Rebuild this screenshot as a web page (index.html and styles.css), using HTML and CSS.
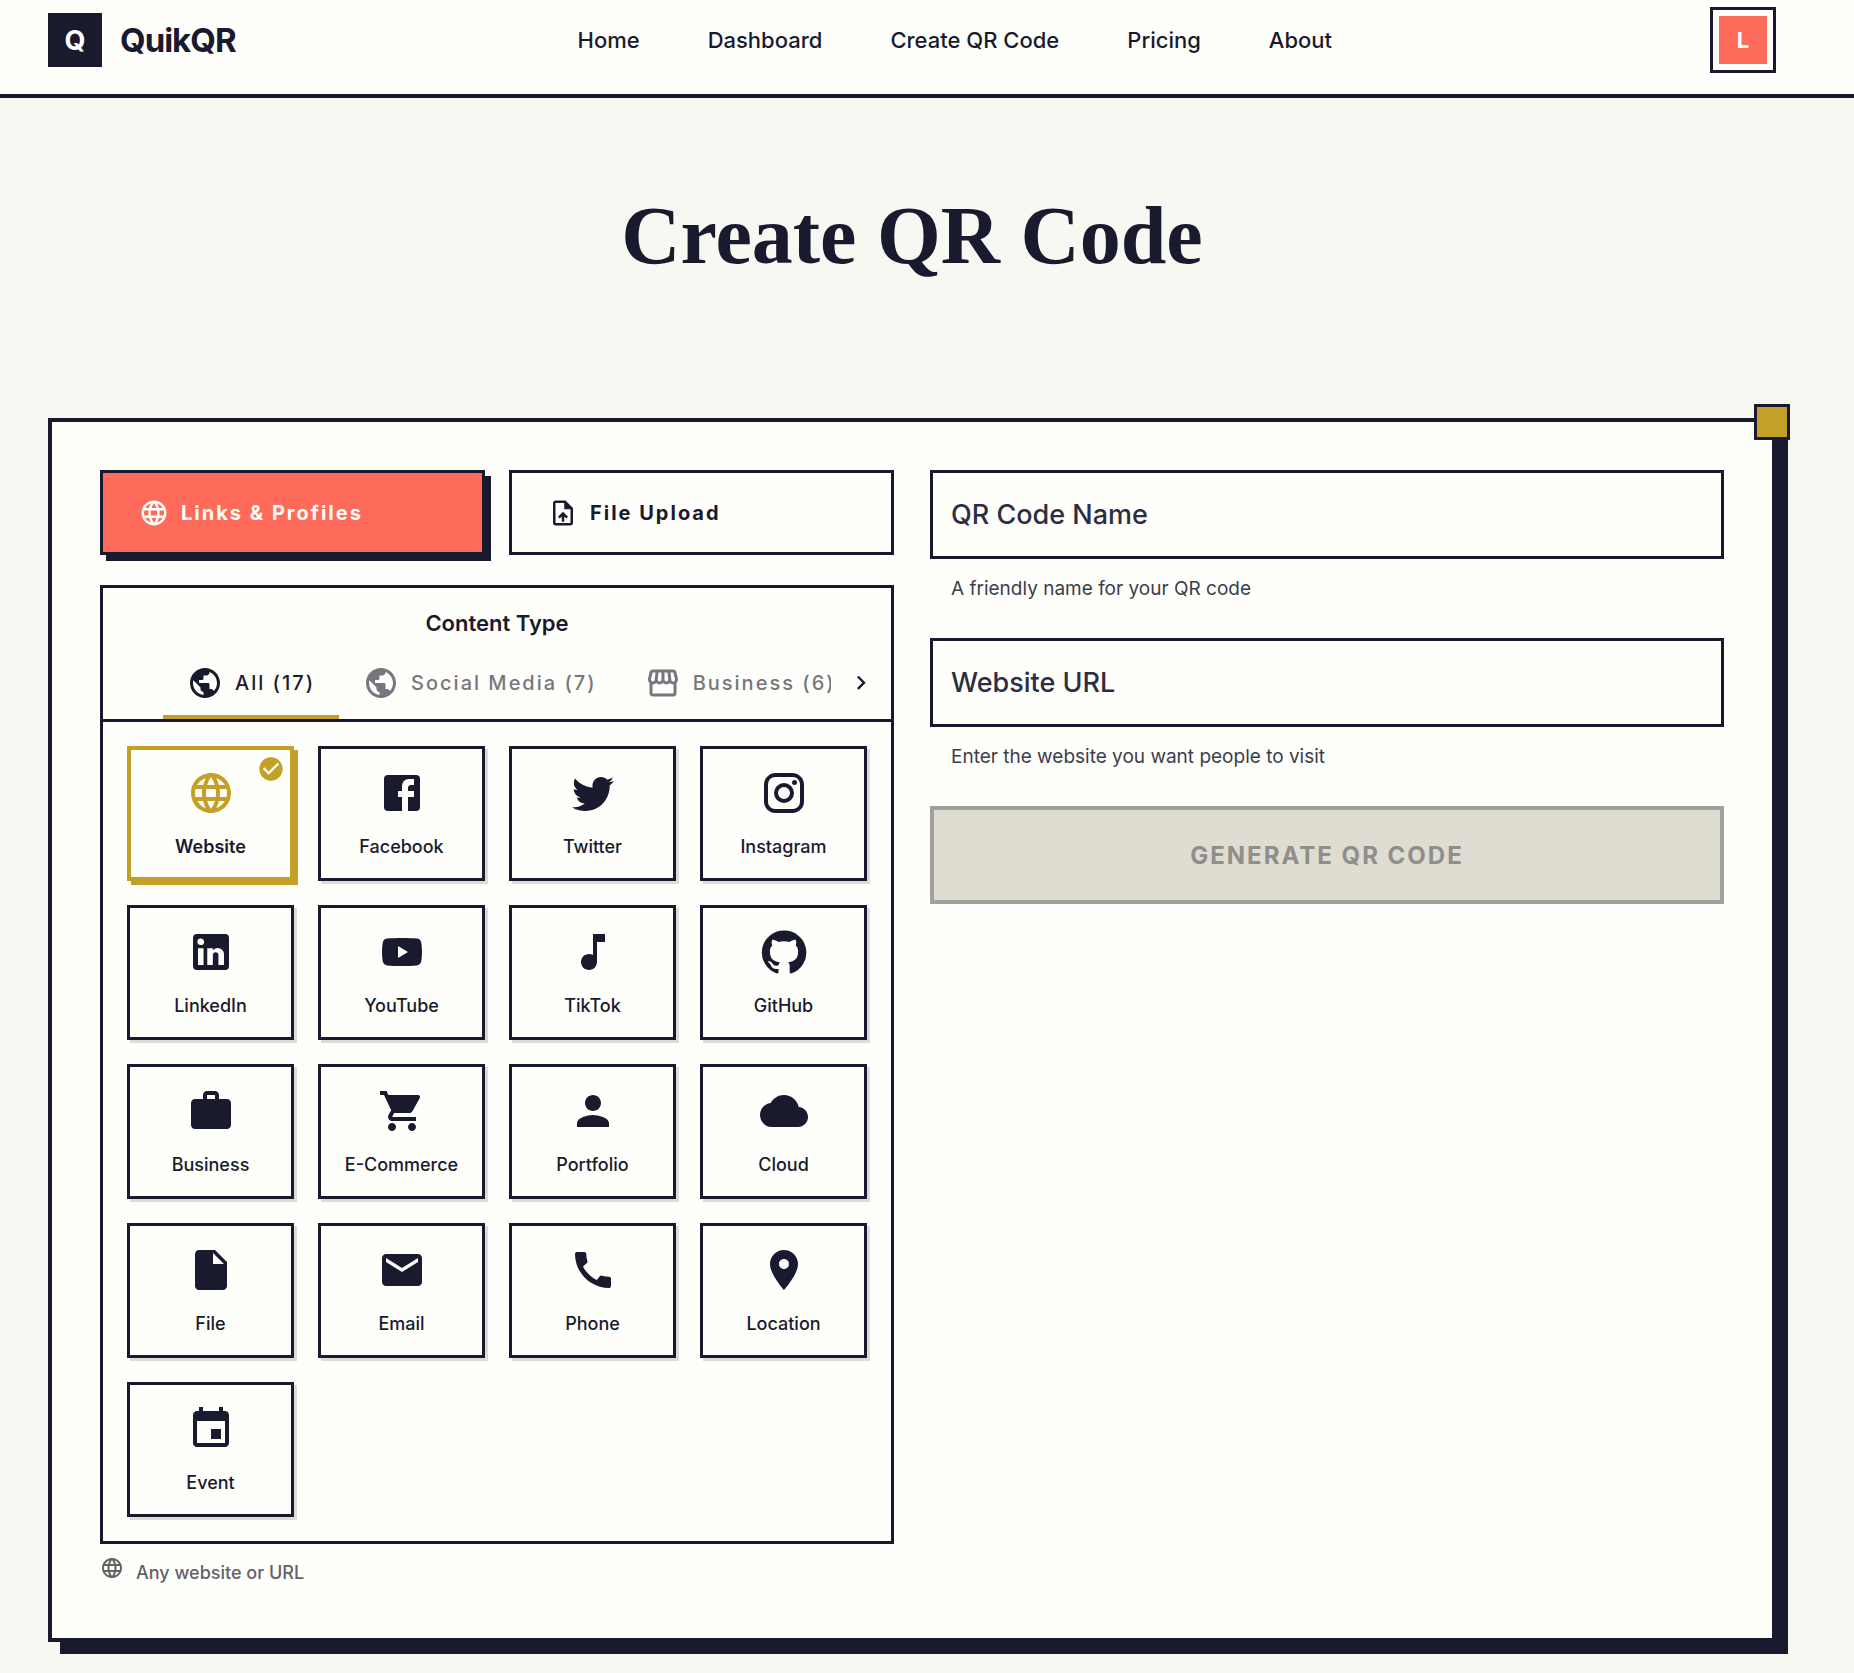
FILE: index.html
```html
<!DOCTYPE html>
<html lang="en">
<head>
    <meta charset="UTF-8">
    <meta name="viewport" content="width=device-width, initial-scale=1.0">
    <title>QuikQR - Create QR Code</title>
    <link rel="stylesheet" href="styles.css">
</head>
<body>
    <!-- Icon sprite -->
    <svg class="sprite" aria-hidden="true">
        <symbol id="i-language" viewBox="0 0 24 24"><path d="M11.99 2C6.47 2 2 6.48 2 12s4.47 10 9.99 10C17.52 22 22 17.52 22 12S17.52 2 11.99 2zm6.93 6h-2.95c-.32-1.25-.78-2.45-1.38-3.56 1.84.63 3.37 1.91 4.33 3.56zM12 4.04c.83 1.2 1.48 2.53 1.91 3.96h-3.82c.43-1.43 1.08-2.76 1.91-3.96zM4.26 14C4.1 13.36 4 12.69 4 12s.1-1.36.26-2h3.38c-.08.66-.14 1.32-.14 2s.06 1.34.14 2H4.26zm.82 2h2.95c.32 1.25.78 2.45 1.38 3.56-1.84-.63-3.37-1.9-4.33-3.56zm2.95-8H5.08c.96-1.66 2.49-2.93 4.33-3.56C8.81 5.55 8.35 6.75 8.03 8zM12 19.96c-.83-1.2-1.48-2.53-1.91-3.96h3.82c-.43 1.43-1.08 2.76-1.91 3.96zM14.34 14H9.66c-.09-.66-.16-1.32-.16-2s.07-1.35.16-2h4.68c.09.65.16 1.32.16 2s-.07 1.34-.16 2zm.25 5.56c.6-1.11 1.06-2.31 1.38-3.56h2.95c-.96 1.65-2.49 2.93-4.33 3.56zM16.36 14c.08-.66.14-1.32.14-2s-.06-1.34-.14-2h3.38c.16.64.26 1.31.26 2s-.1 1.36-.26 2h-3.38z"/></symbol>
        <symbol id="i-upload" viewBox="0 0 24 24"><path d="M14 2H6c-1.100 0-1.990.9-1.990 2L4 20c0 1.100.89 2 1.990 2H18c1.100 0 2-.9 2-2V8l-6-6zm4 18H6V4h7v5h5v11zM8 15.010l1.410 1.410L11 14.840V19h2v-4.160l1.590 1.590L16 15.010 12.010 11 8 15.010z"/></symbol>
        <symbol id="i-public" viewBox="0 0 24 24"><path d="M12 2C6.48 2 2 6.48 2 12s4.480 10 10 10 10-4.480 10-10S17.520 2 12 2zm-1 17.930c-3.950-.49-7-3.850-7-7.930 0-.62.08-1.210.21-1.790L9 15v1c0 1.100.9 2 2 2v1.930zm6.900-2.540c-.26-.81-1-1.390-1.900-1.390h-1v-3c0-.55-.45-1-1-1H8v-2h2c.55 0 1-.45 1-1V7h2c1.100 0 2-.9 2-2v-.41c2.930 1.190 5 4.060 5 7.410 0 2.080-.8 3.970-2.100 5.390z"/></symbol>
        <symbol id="i-store" viewBox="0 0 24 24"><path d="M21.900 8.890l-1.050-4.370c-.22-.9-1-1.520-1.910-1.520H5.050c-.9 0-1.690.63-1.900 1.520L2.100 8.890c-.24 1.020-.02 2.060.62 2.880.08.11.19.19.28.290V19c0 1.100.9 2 2 2h14c1.100 0 2-.9 2-2v-6.940c.09-.09.2-.18.28-.28.64-.82.87-1.870.62-2.890zm-2.990-3.900l1.050 4.370c.1.420.01.840-.25 1.170-.14.180-.44.470-.94.470-.61 0-1.140-.49-1.210-1.140L16.980 5l1.930-.01zM13 5h1.960l.54 4.520c.05.390-.07.780-.33 1.070-.22.260-.54.410-.95.410-.67 0-1.220-.59-1.220-1.310V5zM8.490 9.520L9.040 5H11v4.690c0 .72-.55 1.310-1.290 1.310-.34 0-.65-.15-.89-.41-.25-.29-.37-.68-.33-1.070zm-4.450-.16L5.050 5h1.970l-.58 4.860c-.08.650-.6 1.140-1.210 1.140-.49 0-.8-.29-.93-.47-.27-.32-.36-.75-.26-1.170zM5 19v-6.030c.08.010.15.030.23.030.87 0 1.660-.36 2.240-.95.6.6 1.400.95 2.310.95.87 0 1.650-.36 2.230-.93.59.57 1.390.93 2.290.93.84 0 1.640-.35 2.240-.95.58.59 1.370.95 2.240.95.08 0 .15-.02.23-.03V19H5z"/></symbol>
        <symbol id="i-chevron" viewBox="0 0 24 24"><path d="M8.590 16.340l4.580-4.590-4.580-4.590L10 5.750l6 6-6 6z"/></symbol>
        <symbol id="i-check" viewBox="0 0 24 24"><path d="M12 2C6.480 2 2 6.480 2 12s4.480 10 10 10 10-4.480 10-10S17.520 2 12 2zm-2 15l-5-5 1.410-1.410L10 14.170l7.590-7.590L19 8l-9 9z"/></symbol>
        <symbol id="i-facebook" viewBox="0 0 24 24"><path d="M5 3h14a2 2 0 0 1 2 2v14a2 2 0 0 1-2 2h-4v-7h3v-3h-3V9.500c0-.8.400-1.500 1.500-1.500H18V5h-2.500C13.300 5 12 6.600 12 9v2h-2v3h2v7H5a2 2 0 0 1-2-2V5a2 2 0 0 1 2-2z"/></symbol>
        <symbol id="i-twitter" viewBox="0 0 24 24"><path d="M22.460 6c-.77.350-1.600.580-2.460.690.880-.53 1.560-1.370 1.880-2.380-.83.500-1.750.850-2.720 1.050C18.370 4.500 17.260 4 16 4c-2.350 0-4.270 1.920-4.270 4.290 0 .340.040.670.110.980C8.280 9.090 5.110 7.380 3 4.790c-.37.630-.58 1.370-.58 2.150 0 1.490.75 2.810 1.910 3.560-.71 0-1.370-.2-1.950-.5v.030c0 2.080 1.480 3.820 3.440 4.210a4.220 4.220 0 0 1-1.930.070 4.280 4.280 0 0 0 4 2.980 8.521 8.521 0 0 1-5.330 1.840c-.34 0-.68-.02-1.020-.06C3.440 20.290 5.700 21 8.120 21 16 21 20.330 14.460 20.330 8.790c0-.19 0-.37-.01-.56.84-.6 1.560-1.360 2.140-2.230z"/></symbol>
        <symbol id="i-instagram" viewBox="0 0 24 24"><path d="M7.800 2h8.400C19.400 2 22 4.600 22 7.800v8.400a5.800 5.800 0 0 1-5.800 5.800H7.800C4.600 22 2 19.400 2 16.200V7.800A5.800 5.800 0 0 1 7.800 2m-.2 2A3.600 3.600 0 0 0 4 7.600v8.800C4 18.390 5.610 20 7.600 20h8.800a3.600 3.600 0 0 0 3.600-3.600V7.600C20 5.610 18.390 4 16.400 4H7.600m9.650 1.500a1.250 1.250 0 1 1 0 2.500 1.250 1.250 0 0 1 0-2.500M12 7a5 5 0 1 1 0 10 5 5 0 0 1 0-10m0 2a3 3 0 1 0 0 6 3 3 0 0 0 0-6z"/></symbol>
        <symbol id="i-linkedin" viewBox="0 0 24 24"><path d="M19 3a2 2 0 0 1 2 2v14a2 2 0 0 1-2 2H5a2 2 0 0 1-2-2V5a2 2 0 0 1 2-2h14m-.5 15.500v-5.300a3.260 3.260 0 0 0-3.260-3.260c-.85 0-1.840.520-2.320 1.300v-1.110h-2.790v8.370h2.790v-4.930c0-.77.620-1.400 1.390-1.400a1.400 1.400 0 0 1 1.400 1.400v4.930h2.790M6.880 8.560a1.680 1.680 0 0 0 1.680-1.680c0-.93-.75-1.690-1.680-1.690a1.690 1.690 0 0 0-1.690 1.690c0 .930.760 1.680 1.690 1.680m1.390 9.940v-8.370H5.500v8.370h2.770z"/></symbol>
        <symbol id="i-youtube" viewBox="0 0 24 24"><path d="M10 15l5-3-5-3v6m11.600-7.800c.2 1 .4 2.800.4 4.800s-.2 3.800-.4 4.800c-.3 1.200-1.100 1.800-2.200 1.900-2 .2-4.400.3-7.400.3s-5.400-.1-7.400-.3c-1.100-.1-1.900-.7-2.200-1.900C2.200 15.800 2 14 2 12s.2-3.800.4-4.800c.3-1.200 1.100-1.800 2.200-1.900C6.600 5.100 9 5 12 5s5.400.1 7.400.3c1.100.1 1.900.7 2.200 1.900z"/></symbol>
        <symbol id="i-note" viewBox="0 0 24 24"><path d="M12 3v10.550c-.59-.34-1.270-.55-2-.55-2.210 0-4 1.790-4 4s1.790 4 4 4 4-1.790 4-4V7h4V3h-6z"/></symbol>
        <symbol id="i-github" viewBox="0 0 24 24"><path d="M12 1.270a11 11 0 0 0-3.480 21.460c.55.090.73-.28.730-.55v-1.840c-3.030.640-3.670-1.460-3.670-1.460-.55-1.290-1.280-1.650-1.280-1.650-.92-.65.100-.65.100-.65 1.100 0 1.730 1.100 1.730 1.100.92 1.650 2.570 1.200 3.210.920a2 2 0 0 1 .640-1.470c-2.470-.27-5.040-1.190-5.040-5.500 0-1.100.460-2.100 1.200-2.840a3.760 3.760 0 0 1 0-2.930s.91-.28 3.110 1.100c1.800-.49 3.700-.49 5.500 0 2.100-1.380 3.020-1.100 3.020-1.100a3.760 3.760 0 0 1 .100 2.930c.830.740 1.200 1.740 1.200 2.940 0 4.210-2.570 5.130-5.040 5.400.450.370.820.920.820 2.020v3.030c0 .270.100.640.730.550A11 11 0 0 0 12 1.270"/></symbol>
        <symbol id="i-work" viewBox="0 0 24 24"><path d="M20 6h-4V4c0-1.110-.89-2-2-2h-4c-1.110 0-2 .89-2 2v2H4c-1.110 0-1.990.89-1.990 2L2 19c0 1.110.89 2 2 2h16c1.110 0 2-.89 2-2V8c0-1.110-.89-2-2-2zm-6 0h-4V4h4v2z"/></symbol>
        <symbol id="i-cart" viewBox="0 0 24 24"><path d="M7 18c-1.100 0-1.990.9-1.990 2S5.900 22 7 22s2-.9 2-2-.9-2-2-2zM1 2v2h2l3.600 7.590-1.350 2.450c-.16.280-.25.610-.25.960 0 1.100.9 2 2 2h12v-2H7.420c-.14 0-.25-.11-.25-.25l.03-.12.900-1.630h7.450c.75 0 1.410-.41 1.750-1.030l3.580-6.490c.08-.14.120-.31.120-.48 0-.55-.45-1-1-1H5.210l-.94-2H1zm16 16c-1.100 0-1.990.9-1.990 2s.89 2 1.990 2 2-.9 2-2-.9-2-2-2z"/></symbol>
        <symbol id="i-person" viewBox="0 0 24 24"><path d="M12 12c2.210 0 4-1.790 4-4s-1.790-4-4-4-4 1.790-4 4 1.790 4 4 4zm0 2c-2.670 0-8 1.340-8 4v2h16v-2c0-2.660-5.330-4-8-4z"/></symbol>
        <symbol id="i-cloud" viewBox="0 0 24 24"><path d="M19.350 10.040C18.670 6.590 15.640 4 12 4 9.110 4 6.600 5.640 5.350 8.040 2.340 8.360 0 10.910 0 14c0 3.310 2.690 6 6 6h13c2.760 0 5-2.240 5-5 0-2.640-2.050-4.780-4.650-4.960z"/></symbol>
        <symbol id="i-file" viewBox="0 0 24 24"><path d="M6 2c-1.100 0-1.990.9-1.990 2L4 20c0 1.100.89 2 1.990 2H18c1.100 0 2-.9 2-2V8l-6-6H6zm7 7V3.500L18.500 9H13z"/></symbol>
        <symbol id="i-email" viewBox="0 0 24 24"><path d="M20 4H4c-1.100 0-1.990.9-1.990 2L2 18c0 1.100.9 2 2 2h16c1.100 0 2-.9 2-2V6c0-1.100-.9-2-2-2zm0 4l-8 5-8-5V6l8 5 8-5v2z"/></symbol>
        <symbol id="i-phone" viewBox="0 0 24 24"><path d="M20.010 15.380c-1.230 0-2.420-.2-3.530-.56-.35-.12-.74-.03-1.010.240l-1.570 1.970c-2.830-1.350-5.480-3.900-6.890-6.830l1.950-1.660c.27-.28.350-.67.240-1.020-.37-1.110-.56-2.300-.56-3.530 0-.54-.45-.99-.99-.99H4.190C3.650 3 3 3.240 3 3.990 3 13.280 10.730 21 20.010 21c.71 0 .99-.63.990-1.180v-3.450c0-.54-.45-.99-.99-.99z"/></symbol>
        <symbol id="i-place" viewBox="0 0 24 24"><path d="M12 2C8.130 2 5 5.130 5 9c0 5.250 7 13 7 13s7-7.750 7-13c0-3.870-3.130-7-7-7zm0 9.500c-1.380 0-2.500-1.120-2.500-2.500s1.120-2.500 2.500-2.500 2.500 1.120 2.500 2.500-1.120 2.500-2.500 2.500z"/></symbol>
        <symbol id="i-event" viewBox="0 0 24 24"><path d="M17 12h-5v5h5v-5zM16 1v2H8V1H6v2H5c-1.110 0-1.990.9-1.990 2L3 19c0 1.100.89 2 2 2h14c1.100 0 2-.9 2-2V5c0-1.100-.9-2-2-2h-1V1h-2zm3 18H5V8h14v11z"/></symbol>
    </svg>

    <header class="header">
        <a class="brand" href="#">
            <span class="brand-mark">Q</span>
            <span class="brand-name">QuikQR</span>
        </a>
        <nav class="nav">
            <a href="#">Home</a>
            <a href="#">Dashboard</a>
            <a href="#">Create QR Code</a>
            <a href="#">Pricing</a>
            <a href="#">About</a>
        </nav>
        <button class="profile" type="button" aria-label="Account"><span class="avatar">L</span></button>
    </header>

    <main class="page">
        <h1 class="page-title">Create QR Code</h1>

        <div class="card">
            <div class="left">
                <div class="modes">
                    <button class="mode active" type="button"><svg><use href="#i-language"/></svg>Links &amp; Profiles</button>
                    <button class="mode" type="button"><svg><use href="#i-upload"/></svg>File Upload</button>
                </div>

                <section class="types">
                    <h2 class="types-title">Content Type</h2>
                    <div class="tab-bar">
                        <div class="tabs" role="tablist">
                            <button class="tab active" role="tab" aria-selected="true"><svg><use href="#i-public"/></svg>All (17)</button>
                            <button class="tab" role="tab"><svg><use href="#i-public"/></svg>Social Media (7)</button>
                            <button class="tab" role="tab"><svg><use href="#i-store"/></svg>Business (6)</button>
                        </div>
                        <button class="tab-scroll" type="button" aria-label="Next tabs"><svg><use href="#i-chevron"/></svg></button>
                    </div>
                    <div class="type-grid">
                        <button class="type selected" type="button">
                            <svg class="tick"><use href="#i-check"/></svg>
                            <svg class="icon"><use href="#i-language"/></svg>
                            Website
                        </button>
                        <button class="type" type="button"><svg class="icon"><use href="#i-facebook"/></svg>Facebook</button>
                        <button class="type" type="button"><svg class="icon"><use href="#i-twitter"/></svg>Twitter</button>
                        <button class="type" type="button"><svg class="icon"><use href="#i-instagram"/></svg>Instagram</button>
                        <button class="type" type="button"><svg class="icon"><use href="#i-linkedin"/></svg>LinkedIn</button>
                        <button class="type" type="button"><svg class="icon"><use href="#i-youtube"/></svg>YouTube</button>
                        <button class="type" type="button"><svg class="icon"><use href="#i-note"/></svg>TikTok</button>
                        <button class="type" type="button"><svg class="icon"><use href="#i-github"/></svg>GitHub</button>
                        <button class="type" type="button"><svg class="icon"><use href="#i-work"/></svg>Business</button>
                        <button class="type" type="button"><svg class="icon"><use href="#i-cart"/></svg>E-Commerce</button>
                        <button class="type" type="button"><svg class="icon"><use href="#i-person"/></svg>Portfolio</button>
                        <button class="type" type="button"><svg class="icon"><use href="#i-cloud"/></svg>Cloud</button>
                        <button class="type" type="button"><svg class="icon"><use href="#i-file"/></svg>File</button>
                        <button class="type" type="button"><svg class="icon"><use href="#i-email"/></svg>Email</button>
                        <button class="type" type="button"><svg class="icon"><use href="#i-phone"/></svg>Phone</button>
                        <button class="type" type="button"><svg class="icon"><use href="#i-place"/></svg>Location</button>
                        <button class="type" type="button"><svg class="icon"><use href="#i-event"/></svg>Event</button>
                    </div>
                </section>

                <p class="note"><svg><use href="#i-language"/></svg>Any website or URL</p>
            </div>

            <form class="right">
                <div class="field">
                    <div class="field-box">
                        <input id="qr-name" type="text">
                        <label for="qr-name">QR Code Name</label>
                    </div>
                    <p class="help">A friendly name for your QR code</p>
                </div>
                <div class="field">
                    <div class="field-box">
                        <input id="qr-url" type="text">
                        <label for="qr-url">Website URL</label>
                    </div>
                    <p class="help">Enter the website you want people to visit</p>
                </div>
                <button class="generate" type="submit" disabled>GENERATE QR CODE</button>
            </form>
        </div>
    </main>
</body>
</html>
```

FILE: styles.css
```css
*, *::before {
    margin: 0;
    padding: 0;
    box-sizing: border-box;
}

body {
    font-family: Inter, "Open Sans", sans-serif;
    background-color: #f8f8f3;
    color: #1a1a2e;
}

button, input {
    font-family: inherit;
    color: inherit;
}

button {
    cursor: pointer;
}

svg {
    fill: currentColor;
    flex-shrink: 0;
}

.sprite {
    display: none;
}

/* Header */
.header {
    display: flex;
    align-items: center;
    padding: 7px 78px 21px 48px;
    background-color: #fefffa;
    border-bottom: 4px solid #1a1a2e;
}

.brand {
    display: flex;
    align-items: center;
    gap: 18px;
    color: inherit;
    text-decoration: none;
}

.brand-mark {
    width: 54px;
    height: 54px;
    display: flex;
    align-items: center;
    justify-content: center;
    background-color: #1a1a2e;
    color: #fefffa;
    font-size: 27px;
    font-weight: 700;
}

.brand-name {
    font-size: 33px;
    font-weight: 700;
    letter-spacing: -1px;
}

.nav {
    flex: 1;
    display: flex;
    justify-content: center;
    gap: 68px;
    padding-right: 36px;
}

.nav a {
    color: inherit;
    text-decoration: none;
    font-size: 22px;
    font-weight: 500;
}

.profile {
    padding: 6px;
    border: 3px solid #1a1a2e;
    background-color: #fefffa;
}

.avatar {
    width: 48px;
    height: 48px;
    display: flex;
    align-items: center;
    justify-content: center;
    background-color: #ff6b5b;
    color: #fefffa;
    font-size: 22px;
    font-weight: 700;
}

/* Page */
.page {
    padding: 88px 78px 30px 48px;
}

.page-title {
    margin-bottom: 132px;
    text-align: center;
    font-family: "Liberation Serif", serif;
    font-size: 82px;
    font-weight: 700;
    line-height: 100px;
}

.card {
    position: relative;
    display: grid;
    grid-template-columns: 1fr 1fr;
    gap: 36px;
    padding: 48px;
    background-color: #fefffa;
    border: 4px solid #1a1a2e;
    box-shadow: 12px 12px 0 #1a1a2e;
}

/* gold square on the corner */
.card::before {
    content: "";
    position: absolute;
    top: -18px;
    right: -18px;
    width: 36px;
    height: 36px;
    background-color: #c5a028;
    border: 3px solid #1a1a2e;
}

.left {
    min-width: 0;
}

.modes {
    display: grid;
    grid-template-columns: 1fr 1fr;
    gap: 24px;
    margin-bottom: 30px;
}

.mode {
    display: flex;
    align-items: center;
    gap: 12px;
    height: 85px;
    padding: 0 36px;
    background-color: #fefffa;
    border: 3px solid #1a1a2e;
    font-size: 20px;
    font-weight: 700;
    letter-spacing: 2px;
}

.mode svg {
    width: 30px;
    height: 30px;
}

.mode.active {
    background-color: #ff6b5b;
    color: #fefffa;
    box-shadow: 6px 6px 0 #1a1a2e;
}

/* Content type box */
.types {
    border: 3px solid #1a1a2e;
}

.types-title {
    padding: 20px 0 9px;
    text-align: center;
    font-size: 22px;
    font-weight: 600;
    line-height: 30px;
}

.tab-bar {
    display: flex;
    padding-left: 60px;
    border-bottom: 3px solid #1a1a2e;
}

.tabs {
    flex: 1;
    min-width: 0;
    display: flex;
    overflow: hidden;
}

.tab {
    flex-shrink: 0;
    display: flex;
    align-items: center;
    gap: 12px;
    height: 72px;
    padding: 0 24px;
    background: none;
    border: none;
    color: #77767f;
    font-size: 20px;
    font-weight: 500;
    letter-spacing: 2px;
    white-space: nowrap;
}

.tab svg {
    width: 36px;
    height: 36px;
}

.tab.active {
    color: #1a1a2e;
    box-shadow: inset 0 -4px 0 #c5a028;
}

.tab-scroll {
    width: 60px;
    display: flex;
    align-items: center;
    justify-content: center;
    background: none;
    border: none;
}

.tab-scroll svg {
    width: 28px;
    height: 28px;
}

.type-grid {
    display: grid;
    grid-template-columns: repeat(4, 1fr);
    gap: 24px;
    padding: 24px;
}

.type {
    position: relative;
    display: flex;
    flex-direction: column;
    align-items: center;
    gap: 16px;
    height: 135px;
    padding-top: 20px;
    background-color: #fefffa;
    border: 3px solid #1a1a2e;
    box-shadow: 3px 3px 0 #dcdcdb;
    font-size: 18px;
    font-weight: 500;
    line-height: 28px;
}

.type .icon {
    width: 48px;
    height: 48px;
}

.type.selected {
    padding-top: 19px;
    border: 4px solid #c5a028;
    box-shadow: 4px 4px 0 #c5a028;
    font-weight: 600;
}

.type.selected svg {
    color: #c5a028;
}

.type .tick {
    position: absolute;
    top: 5px;
    right: 5px;
    width: 28px;
    height: 28px;
}

.note {
    display: flex;
    gap: 12px;
    padding-top: 12px;
    color: #626267;
    font-size: 18px;
    font-weight: 500;
    line-height: 34px;
}

.note svg {
    width: 24px;
    height: 24px;
}

/* Form */
.field {
    margin-bottom: 32px;
}

.field-box {
    display: grid;
}

.field-box input,
.field-box label {
    grid-area: 1 / 1;
}

.field-box input {
    width: 100%;
    height: 89px;
    padding: 0 18px;
    background-color: #fefffa;
    border: 3px solid #1a1a2e;
    font-size: 27px;
}

.field-box label {
    align-self: center;
    justify-self: start;
    padding-left: 21px;
    color: #2d2d44;
    font-size: 27px;
    font-weight: 500;
    pointer-events: none;
}

.help {
    padding: 12px 21px 0;
    color: #3c3c4c;
    font-size: 19px;
    line-height: 35px;
}

.generate {
    width: 100%;
    height: 98px;
    background-color: #dfdcd1;
    border: 4px solid #a0a19b;
    color: #908e8b;
    font-size: 24px;
    font-weight: 700;
    letter-spacing: 2px;
    cursor: default;
}

@media (max-width: 1100px) {
    .card {
        grid-template-columns: 1fr;
    }

    .nav {
        gap: 24px;
    }
}
```
